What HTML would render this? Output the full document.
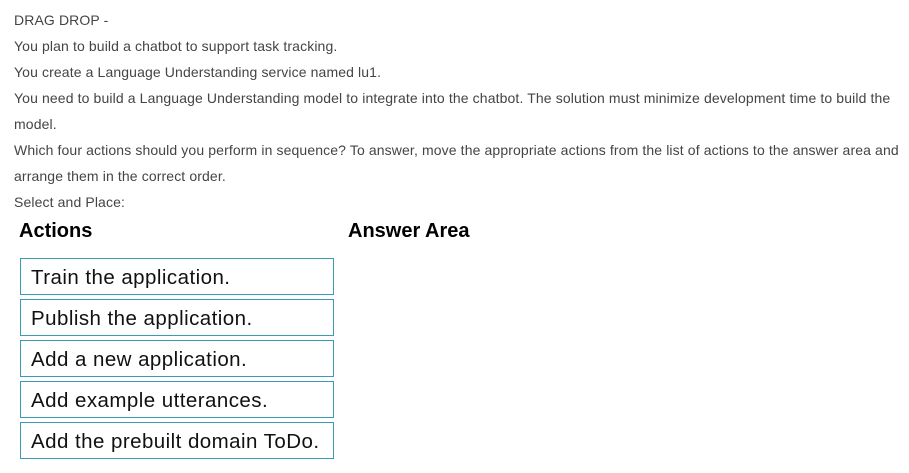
<!DOCTYPE html>
<html><head><meta charset="utf-8"><style>
body{margin:0;width:909px;height:473px;background:#fff;position:relative;overflow:hidden;font-family:"Liberation Sans",sans-serif}
.l{position:absolute;left:14px;font-size:14px;color:#444;white-space:nowrap;line-height:20px;letter-spacing:0.12px}
.h{position:absolute;font-weight:bold;font-size:20px;color:#000;top:218px;line-height:26px}
.b{position:absolute;left:20px;width:312px;height:35px;border:1px solid #3b9bb2;font-size:20.5px;color:#111;line-height:38px;box-sizing:content-box;letter-spacing:0.45px}
.b span{padding-left:10px}
</style></head><body>
<div class="l" style="top:10px">DRAG DROP -</div>
<div class="l" style="top:36px">You plan to build a chatbot to support task tracking.</div>
<div class="l" style="top:62px">You create a Language Understanding service named lu1.</div>
<div class="l" style="top:88px">You need to build a Language Understanding model to integrate into the chatbot. The solution must minimize development time to build the</div>
<div class="l" style="top:114px">model.</div>
<div class="l" style="top:140px">Which four actions should you perform in sequence? To answer, move the appropriate actions from the list of actions to the answer area and</div>
<div class="l" style="top:166px">arrange them in the correct order.</div>
<div class="l" style="top:192px">Select and Place:</div>
<div class="h" style="left:19px">Actions</div>
<div class="h" style="left:348px">Answer Area</div>
<div class="b" style="top:258px"><span>Train the application.</span></div>
<div class="b" style="top:299px"><span>Publish the application.</span></div>
<div class="b" style="top:340px"><span>Add a new application.</span></div>
<div class="b" style="top:381px"><span>Add example utterances.</span></div>
<div class="b" style="top:422px"><span>Add the prebuilt domain ToDo.</span></div>
</body></html>
